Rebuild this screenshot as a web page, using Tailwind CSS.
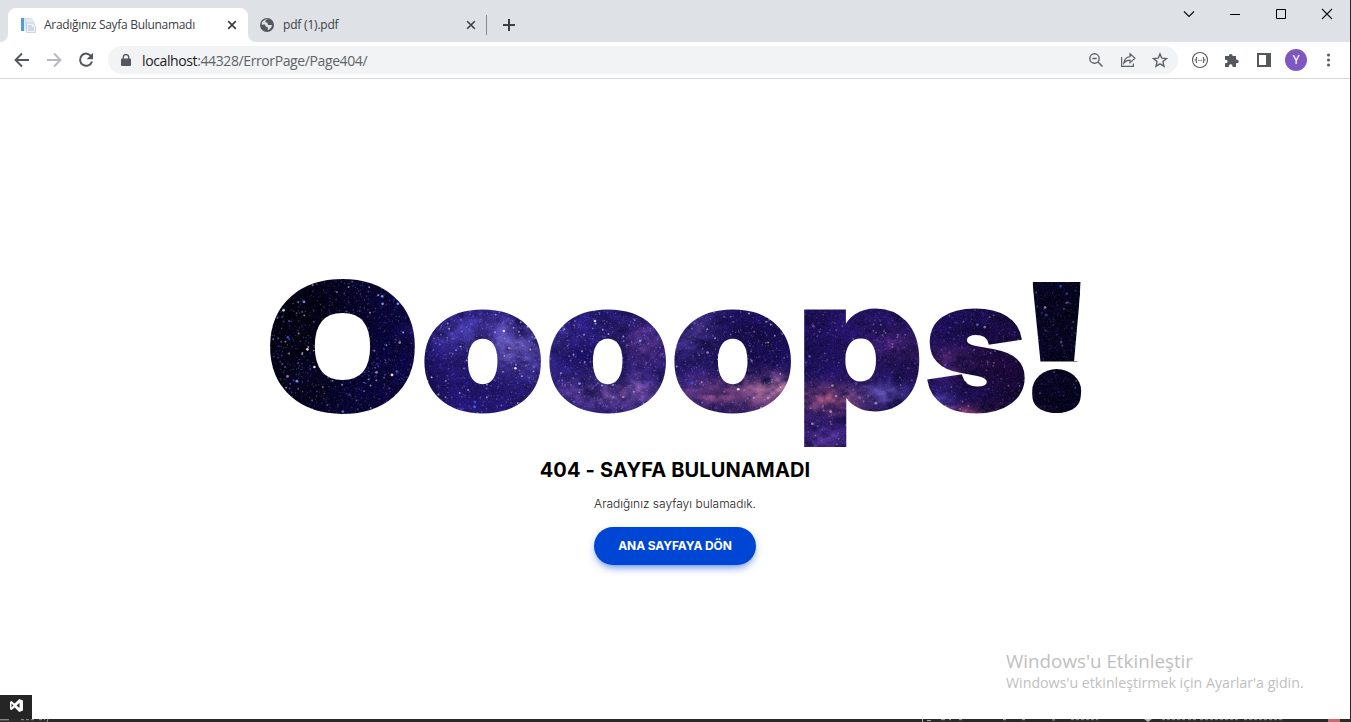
<!DOCTYPE html>
<html lang="tr">
<head>
<meta charset="utf-8">
<title>Aradığınız Sayfa Bulunamadı</title>
<script src="https://cdn.jsdelivr.net/npm/@tailwindcss/browser@4"></script>
</head>
<body class="w-[1351px] h-[722px] overflow-hidden bg-[#2b2929] font-['Open_Sans',sans-serif]">
<div class="flex flex-col h-[722px]">
<div class="flex flex-col w-[1350px] h-[719px] bg-white">
  <!-- tab strip -->
  <header class="flex h-[42px] shrink-0 bg-[#dee1e6] text-[12px] text-[#3c4043]">
    <div class="w-2 flex items-end"><div class="size-2 bg-white"><div class="size-2 rounded-br-lg bg-[#dee1e6]"></div></div></div>
    <div class="mt-2 w-[240px] rounded-t-lg bg-white flex items-center pl-3 pr-[11px]">
      <svg class="size-4 shrink-0" viewBox="0 0 16 16"><path d="M1 1h8v13H1z" fill="#dfeaf4"/><path d="M1 1h3v13H1z" fill="#4f9fd6"/><path d="M5.500 1.500H11l3 3v4H5.500z" fill="#e6ebf1" stroke="#c3ced9" stroke-width=".6"/><path d="M6.500 6h6l3 3v6.500h-9z" fill="#eef2f7" stroke="#b9c6d4" stroke-width=".7"/><path d="M8 9h4M8 11h6M8 13h6" stroke="#a6b7cb" stroke-width=".9"/></svg>
      <span class="ml-2 whitespace-nowrap tracking-[-0.3px]">Aradığınız Sayfa Bulunamadı</span>
      <svg class="ml-auto size-[10px] shrink-0" viewBox="0 0 10 10"><path d="M1.200 1.200l7.600 7.600M8.800 1.200L1.200 8.800" stroke="#3c4043" stroke-width="1.700"/></svg>
    </div>
    <div class="w-2 flex items-end"><div class="size-2 bg-white"><div class="size-2 rounded-bl-lg bg-[#dee1e6]"></div></div></div>
    <div class="mt-2 w-[231px] flex items-center pl-1 pr-[11px]">
      <svg class="-ml-px size-4 shrink-0" viewBox="0 0 16 16"><circle cx="8" cy="8" r="7" fill="#54585d"/><path d="M9 2.300c-1.200.5-2.700 1-2.700 2.300 0 1.200 1.700.7 2.200 1.500.4.700 0 1.300.8 1.800 1 .5 2-.2 3.700.4-.3 2.500-1.900 4.200-4.200 4.800-.6-.7.500-1.700.1-2.500-.5-.8-1.800-.4-2.300-1.300-.3-.6 0-1.200-.6-1.600-.9-.5-2 .2-3.500-.1C2.900 4.500 5.500 2 9 2.300z" fill="#dee1e6"/></svg>
      <span class="ml-[8px] whitespace-nowrap tracking-[-0.2px]">pdf (1).pdf</span>
      <svg class="ml-auto size-[10px] shrink-0" viewBox="0 0 10 10"><path d="M1.200 1.200l7.600 7.600M8.800 1.200L1.200 8.800" stroke="#3c4043" stroke-width="1.600"/></svg>
    </div>
    <div class="mt-[15px] h-5 w-px bg-[#85888c] -ml-px"></div>
    <svg class="mt-[19px] ml-4 size-3" viewBox="0 0 12 12"><path d="M6 0v12M0 6h12" stroke="#3c4043" stroke-width="2"/></svg>
    <div class="ml-auto flex h-7">
      <svg class="w-[46px] h-7" viewBox="0 0 46 28"><path d="M18 11.500l5 5 5-5" fill="none" stroke="#111" stroke-width="1.200"/></svg>
      <svg class="w-[46px] h-7" viewBox="0 0 46 28"><path d="M18 14.500h10" stroke="#000"/></svg>
      <svg class="w-[46px] h-7" viewBox="0 0 46 28"><path d="M18.500 9.500h9v9h-9z" fill="none" stroke="#000"/></svg>
      <svg class="w-[46px] h-7" viewBox="0 0 46 28"><path d="M18 9l10 10M28 9L18 19" stroke="#111" stroke-width="1.100"/></svg>
    </div>
  </header>
  <!-- toolbar -->
  <div class="flex items-center h-[37px] shrink-0 border-b border-[#d5d7da] pl-3">
    <svg class="size-5" viewBox="0 0 20 20"><path d="M17 10H4M10 3.500L3.500 10l6.500 6.500" fill="none" stroke="#54585d" stroke-width="1.900"/></svg>
    <svg class="ml-3 size-5" viewBox="0 0 20 20"><path d="M3 10h13M10 3.500l6.500 6.500-6.500 6.500" fill="none" stroke="#b7b9bc" stroke-width="1.900"/></svg>
    <svg class="ml-3 size-5" viewBox="0 0 20 20"><path d="M15.300 6.400A6.100 6.100 0 1 0 16 11.500" fill="none" stroke="#54585d" stroke-width="2"/><path d="M17 2.800v6.400h-6.400z" fill="#54585d"/></svg>
    <div class="ml-3 flex h-7 w-[1070px] items-center rounded-full bg-[#f1f3f4] pl-[13px] pr-[10px] text-[14px] text-[#5f6368]">
      <svg class="w-[10px] h-[13px] shrink-0" viewBox="0 0 10 13"><rect y="4.500" width="10" height="7.500" rx="1" fill="#54585d"/><path d="M2.300 5V3.300a2.700 2.700 0 0 1 5.400 0V5" fill="none" stroke="#54585d" stroke-width="1.300"/></svg>
      <span class="ml-[11px] whitespace-nowrap tracking-[-0.39px]"><span class="text-[#202124]">localhost</span>:44328/ErrorPage/Page404/</span>
      <svg class="ml-auto size-4" viewBox="0 0 16 16"><circle cx="6.500" cy="6.500" r="4.700" fill="none" stroke="#5f6368" stroke-width="1.400"/><path d="M4.300 6.500h4.400M10 10l4.500 4.500" stroke="#5f6368" stroke-width="1.500"/></svg>
      <svg class="ml-4 size-4" viewBox="0 0 16 16"><path d="M1.600 5v9.400h11.800V11.500M10 1.800l5 4.500-5 4.400V8.200c-3 0-4.800 1-6.200 2.900.4-3.200 2.400-6 6.200-6.500z" fill="none" stroke="#5f6368" stroke-width="1.200"/></svg>
      <svg class="ml-4 size-4" viewBox="0 0 16 16"><path d="M8 1.900l1.800 4.300 4.700.4-3.600 3 1.100 4.600L8 11.800l-4 2.400 1.100-4.600-3.600-3 4.700-.4z" fill="none" stroke="#5f6368" stroke-width="1.400"/></svg>
    </div>
    <svg class="ml-[14px] size-4 overflow-visible" viewBox="0 0 16 16"><circle cx="8" cy="8" r="7.500" fill="none" stroke="#55585c" stroke-width="1.100"/><path d="M5.200 5.300c-1.400 0-.7 1 -.8 1.800q-.1.700-.8.900.7.200.8.900c.1.800-.6 1.800.8 1.800M10.800 5.300c1.400 0 .7 1 .8 1.800q.1.700.8.900-.7.200-.8.900c-.1.800.6 1.800-.8 1.800" fill="none" stroke="#55585c" stroke-width="1.100"/><path d="M6 8.300h4" stroke="#55585c" stroke-dasharray="1 .5"/></svg>
    <svg class="ml-4 size-4" viewBox="0 0 16 16"><path d="M1 4h3.700a2 2 0 1 1 4 0H12v3.500h.8a1.900 1.900 0 1 1 0 3.800H12V15H8.500v-1a1.800 1.800 0 0 0-3.600 0v1H1v-3.700h.8a1.800 1.800 0 0 0 0-3.600H1z" fill="#54585d"/></svg>
    <svg class="ml-4 size-4" viewBox="0 0 16 16"><path d="M1 1h14v14H1zM3 3v10h7V3z" fill="#54585d" fill-rule="evenodd"/></svg>
    <div class="ml-[13px] flex size-[22px] items-center justify-center rounded-full bg-[#7e57c2] text-[12px] text-white font-['Roboto',sans-serif]">Y</div>
    <svg class="ml-[13px] size-4" viewBox="0 0 16 16"><g fill="#54585d"><circle cx="8.500" cy="3" r="1.500"/><circle cx="8.500" cy="8" r="1.500"/><circle cx="8.500" cy="13" r="1.500"/></g></svg>
  </div>
  <!-- page -->
  <main class="relative flex flex-1 flex-col items-center pt-[191px] font-['Inter',sans-serif]">
    <h1 class="relative isolate h-[185px] w-[830px]">
      <canvas id="sky" width="828" height="183" class="absolute left-px top-px"></canvas>
      <svg class="absolute inset-0 mix-blend-screen" width="830" height="185" viewBox="260 270 830 185">
        <rect x="255" y="265" width="840" height="195" fill="#fff"/>
        <g font-family="Inter" font-weight="900" font-size="180" fill="#000" stroke="#000" stroke-width="3">
          <text transform="translate(265.600 410) scale(1.103 .971)" stroke-width="4">O</text>
          <text transform="translate(420.100 410) scale(1.114 1)">o</text>
          <text transform="translate(545.100 410) scale(1.114 1)">o</text>
          <text transform="translate(670.100 410) scale(1.114 1)">o</text>
          <text transform="translate(795.900 409) scale(1.098 1)">p</text>
          <text transform="translate(924.600 410) scale(.975 1)">s</text>
          <text transform="translate(1012.500 411) scale(1.285 .985)" stroke="none">!</text>
        </g>
        <!-- round dot and tapered stem of the exclamation mark -->
        <path d="M1028 361.500h58V392h-58zM1028 280h4.200l8.300 82H1028zM1086 280h-4.700l-7.300 82h12z" fill="#fff"/>
        <ellipse cx="1056.700" cy="391" rx="24.500" ry="22" fill="#000"/>
      </svg>
    </h1>
    <h2 class="mt-[3px] text-[20px] leading-[24px] font-bold text-black tracking-[0.150px] whitespace-nowrap">404 - SAYFA BULUNAMADI</h2>
    <p class="mt-[13px] text-[12px] leading-[18px] font-light text-[#222] whitespace-nowrap">Aradığınız sayfayı bulamadık.</p>
    <a class="mt-[14px] flex h-[38px] w-[162px] items-center justify-center rounded-full bg-[#0046d5] text-[12px] font-bold text-white tracking-[-0.1px] whitespace-nowrap shadow-[0_4px_10px_-3px_rgba(0,70,213,.8)]">ANA SAYFAYA DÖN</a>
    <div class="absolute left-[1006px] top-[570px] font-['Open_Sans',sans-serif] text-[#c0c0c0] whitespace-nowrap">
      <div class="text-[18.800px] leading-[24px]">Windows'u Etkinleştir</div>
      <div class="text-[14.200px] leading-[20px]">Windows'u etkinleştirmek için Ayarlar'a gidin.</div>
    </div>
    <div class="absolute left-0 bottom-0 flex h-6 w-8 items-center justify-center bg-[#252526]">
      <svg class="-mt-[3px] w-[13px] h-[13px]" viewBox="0 0 13 13"><path d="M9.300 0L13 1.500v10L9.300 13 4.600 8.500 1.600 11 0 10.200V2.800L1.600 2l3 2.500zM9.500 4L6.500 6.500l3 2.500zM1.500 4.600v3.800l1.900-1.900z" fill="#fff" fill-rule="evenodd"/></svg>
    </div>
  </main>
</div>
<!-- sliver of the window underneath -->
<svg class="h-[3px] w-[1351px]" viewBox="0 0 1351 3"><path d="M0 .8h9M922.500 0v3M927 1.500h4M941 .7h4M949 .7h2M959 .7h3M1003 .7h3M1022 .7h3M1052 .9h3" stroke="#aaa"/><path d="M21 .7h8M31 .7h4M39 .7h6M48 0l-1 3M1071 .7h27M1162 .7h24M1188 .7h8M1200 .7h40M1244 .7h40" stroke="#999" stroke-dasharray="3 2"/><path d="M1144 0h8l-4 3z" fill="#bbb"/><path d="M1328 0h12v3h-12z" fill="#c96a73"/></svg>
</div>
<script>
  // Starfield behind the headline
  const cv = document.getElementById('sky'), g = cv.getContext('2d'), W = 828, H = 183;
  let seed = 4041;
  const rnd = () => (seed = (seed * 16807) % 2147483647) / 2147483647;
  const lattice = Array.from({ length: 4096 }, rnd);
  const val = (x, y) => {
    const i = Math.floor(x), j = Math.floor(y), u = x - i, v = y - j;
    const s = u * u * (3 - 2 * u), t = v * v * (3 - 2 * v);
    const at = (a, b) => lattice[(a * 57 + b * 131) & 4095];
    return (at(i, j) * (1 - s) + at(i + 1, j) * s) * (1 - t) + (at(i, j + 1) * (1 - s) + at(i + 1, j + 1) * s) * t;
  };
  const fbm = (x, y) => val(x, y) * .42 + val(x * 2.1, y * 2.1) * .3 + val(x * 4.3, y * 4.3) * .28;
  // base colour along x
  const stops = [[0, 4, 2, 22], [70, 6, 3, 40], [145, 11, 6, 62], [175, 34, 22, 112], [270, 40, 26, 120], [350, 37, 25, 112], [440, 34, 22, 104], [520, 26, 14, 88], [600, 34, 18, 92], [690, 26, 13, 82], [755, 24, 11, 62], [775, 7, 5, 34], [828, 5, 4, 28]];
  // local clouds: x, y, rx, ry, r, g, b, strength
  const clouds = [[25, 40, 60, 45, 0, 0, 6, .6], [255, 75, 42, 30, 96, 84, 168, .6], [195, 60, 35, 18, 72, 62, 165, .5], [220, 115, 50, 20, 24, 14, 88, .5],
    [380, 75, 30, 22, 95, 55, 130, .5], [350, 120, 48, 16, 120, 82, 155, .65], [320, 85, 35, 14, 20, 12, 85, .6], [435, 60, 22, 24, 90, 72, 155, .55], [480, 70, 40, 35, 26, 12, 82, .5],
    [505, 118, 28, 15, 195, 130, 160, .65], [465, 125, 45, 20, 110, 62, 115, .65], [570, 128, 36, 14, 150, 80, 115, .6], [560, 168, 30, 18, 74, 44, 130, .6], [622, 122, 24, 11, 100, 92, 190, .5], [640, 75, 28, 18, 82, 42, 115, .4],
    [695, 92, 32, 16, 92, 42, 108, .6], [720, 140, 45, 7, 140, 66, 110, .6], [740, 95, 30, 28, 28, 6, 52, .7], [680, 130, 13, 10, 90, 75, 180, .5]];
  const img = g.createImageData(W, H);
  for (let y = 0; y < H; y++) for (let x = 0; x < W; x++) {
    let k = 0; while (k < stops.length - 2 && x > stops[k + 1][0]) k++;
    const a = stops[k], b = stops[k + 1], f = (x - a[0]) / (b[0] - a[0]);
    let c = [1, 2, 3].map(n => a[n] + (b[n] - a[n]) * f);
    const n = fbm(x / 20, y / 15);
    for (const q of clouds) {
      const d = ((x - q[0]) / q[2]) ** 2 + ((y - q[1]) / q[3]) ** 2;
      if (d < 4) { const w = Math.min(1, q[7] * Math.exp(-d) * Math.max(0, n * 2.6 - .3)); c = c.map((v, m) => v + (q[4 + m] - v) * w); }
    }
    const m = .6 + n * .75, grain = (rnd() - .5) * 22, o = (y * W + x) * 4;
    img.data[o] = c[0] * m + grain * .6; img.data[o + 1] = c[1] * m + grain * .5; img.data[o + 2] = c[2] * m + grain * 1.3; img.data[o + 3] = 255;
  }
  g.putImageData(img, 0, 0);
  const tints = ['60,80,225', '75,105,240', '120,150,255', '205,220,255', '170,120,190', '255,225,205'];
  for (let i = 0; i < 8500; i++) {
    const x = rnd() * W, y = rnd() * H, p = rnd(), dim = x > 520 ? .55 : 1;
    const r = p > .988 ? 1.35 : p > .86 ? .95 : .7;
    g.fillStyle = `rgba(${tints[Math.floor(rnd() * 6)]},${(p > .988 ? .95 : p > .86 ? .6 : .27) * dim})`;
    g.beginPath(); g.arc(x, y, r, 0, 7); g.fill();
  }
</script>
</body>
</html>
